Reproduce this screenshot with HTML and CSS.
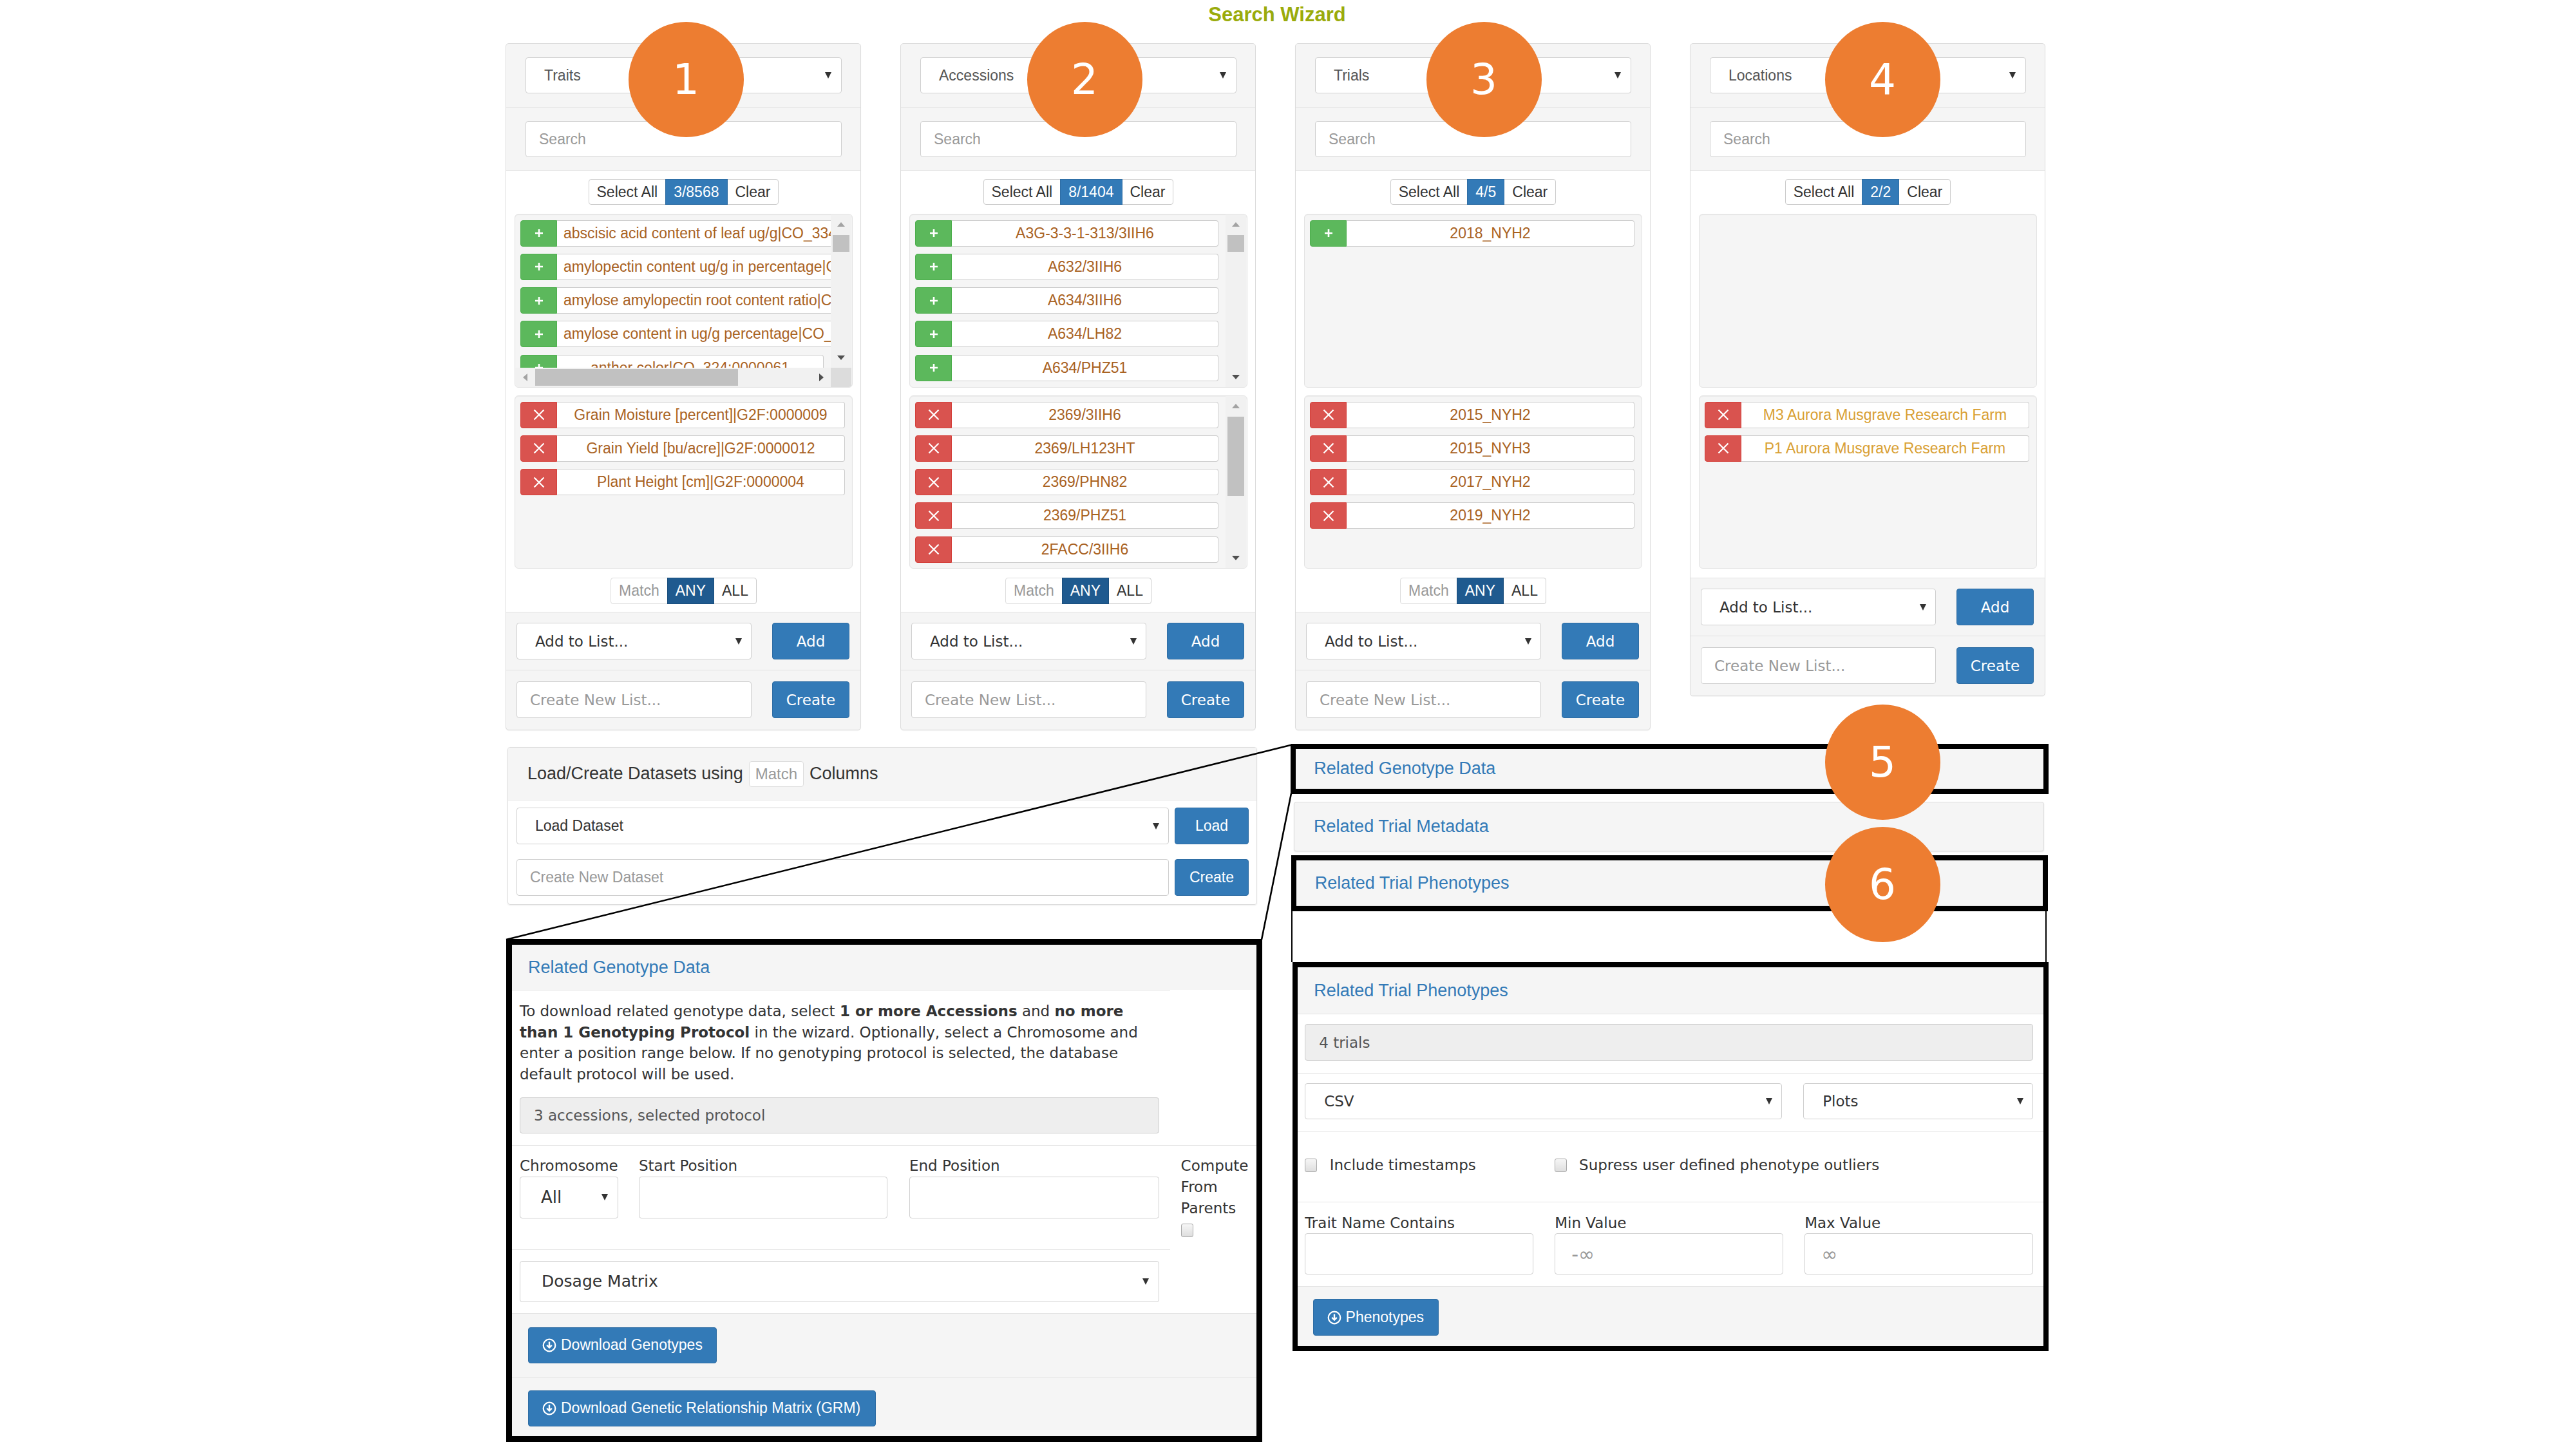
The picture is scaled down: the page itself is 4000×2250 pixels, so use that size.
FILE: index.html
```html
<!DOCTYPE html>
<html lang="en">
<head>
<meta charset="utf-8">
<title>Search Wizard</title>
<link rel="stylesheet" href="styles.css">
</head>
<body>
<div class="page">
  <h1 class="title">Search Wizard</h1>

  <div class="wizard">
    <!-- Panel 1 -->
    <section class="wpanel">
      <div class="sec"><div class="sel">Traits</div></div>
      <div class="sec search"><div class="inp">Search</div></div>
      <div class="body">
        <div class="bgrp"><span class="b">Select All</span><span class="b on">3/8568</span><span class="b">Clear</span></div>
        <div class="well up hv">
          <div class="vp">
            <div class="rows wide">
              <div class="row"><span class="rb add"><svg width="14" height="14" viewBox="0 0 14 14"><path d="M7 1v12M1 7h12" stroke="#fff" stroke-width="2.6"/></svg></span><span class="rf">abscisic acid content of leaf ug/g|CO_334:0000047</span></div>
              <div class="row"><span class="rb add"><svg width="14" height="14" viewBox="0 0 14 14"><path d="M7 1v12M1 7h12" stroke="#fff" stroke-width="2.6"/></svg></span><span class="rf">amylopectin content ug/g in percentage|CO_334:0000121</span></div>
              <div class="row"><span class="rb add"><svg width="14" height="14" viewBox="0 0 14 14"><path d="M7 1v12M1 7h12" stroke="#fff" stroke-width="2.6"/></svg></span><span class="rf">amylose amylopectin root content ratio|CO_334:0000124</span></div>
              <div class="row"><span class="rb add"><svg width="14" height="14" viewBox="0 0 14 14"><path d="M7 1v12M1 7h12" stroke="#fff" stroke-width="2.6"/></svg></span><span class="rf">amylose content in ug/g percentage|CO_334:0000120</span></div>
              <div class="row"><span class="rb add"><svg width="14" height="14" viewBox="0 0 14 14"><path d="M7 1v12M1 7h12" stroke="#fff" stroke-width="2.6"/></svg></span><span class="rf">anther color|CO_324:0000061</span></div>
            </div>
          </div>
          <div class="vsb"><span class="ar up dis"></span><span class="th t26"></span><span class="sp"></span><span class="ar dn"></span></div>
          <div class="hsb"><span class="ar lf dis"></span><span class="th h315"></span><span class="sp"></span><span class="ar rt"></span></div>
          <div class="corner"></div>
        </div>
        <div class="well lo">
          <div class="rows">
            <div class="row"><span class="rb rm"><svg width="18" height="18" viewBox="0 0 18 18"><path d="M1.5 1.5l15 15M16.5 1.5l-15 15" stroke="#fff" stroke-width="2.2"/></svg></span><span class="rf">Grain Moisture [percent]|G2F:0000009</span></div>
            <div class="row"><span class="rb rm"><svg width="18" height="18" viewBox="0 0 18 18"><path d="M1.5 1.5l15 15M16.5 1.5l-15 15" stroke="#fff" stroke-width="2.2"/></svg></span><span class="rf">Grain Yield [bu/acre]|G2F:0000012</span></div>
            <div class="row"><span class="rb rm"><svg width="18" height="18" viewBox="0 0 18 18"><path d="M1.5 1.5l15 15M16.5 1.5l-15 15" stroke="#fff" stroke-width="2.2"/></svg></span><span class="rf">Plant Height [cm]|G2F:0000004</span></div>
          </div>
        </div>
        <div class="bgrp mg"><span class="b dim">Match</span><span class="b act">ANY</span><span class="b">ALL</span></div>
      </div>
      <div class="foot"><div class="fsel">Add to List...</div><span class="fbtn">Add</span></div>
      <div class="foot last"><div class="finp">Create New List...</div><span class="fbtn">Create</span></div>
    </section>

    <!-- Panel 2 -->
    <section class="wpanel">
      <div class="sec"><div class="sel">Accessions</div></div>
      <div class="sec search"><div class="inp">Search</div></div>
      <div class="body">
        <div class="bgrp"><span class="b">Select All</span><span class="b on">8/1404</span><span class="b">Clear</span></div>
        <div class="well up vonly">
          <div class="rows">
            <div class="row"><span class="rb add"><svg width="14" height="14" viewBox="0 0 14 14"><path d="M7 1v12M1 7h12" stroke="#fff" stroke-width="2.6"/></svg></span><span class="rf">A3G-3-3-1-313/3IIH6</span></div>
            <div class="row"><span class="rb add"><svg width="14" height="14" viewBox="0 0 14 14"><path d="M7 1v12M1 7h12" stroke="#fff" stroke-width="2.6"/></svg></span><span class="rf">A632/3IIH6</span></div>
            <div class="row"><span class="rb add"><svg width="14" height="14" viewBox="0 0 14 14"><path d="M7 1v12M1 7h12" stroke="#fff" stroke-width="2.6"/></svg></span><span class="rf">A634/3IIH6</span></div>
            <div class="row"><span class="rb add"><svg width="14" height="14" viewBox="0 0 14 14"><path d="M7 1v12M1 7h12" stroke="#fff" stroke-width="2.6"/></svg></span><span class="rf">A634/LH82</span></div>
            <div class="row"><span class="rb add"><svg width="14" height="14" viewBox="0 0 14 14"><path d="M7 1v12M1 7h12" stroke="#fff" stroke-width="2.6"/></svg></span><span class="rf">A634/PHZ51</span></div>
          </div>
          <div class="vsb"><span class="ar up dis"></span><span class="th t26"></span><span class="sp"></span><span class="ar dn"></span></div>
        </div>
        <div class="well lo vonly">
          <div class="rows">
            <div class="row"><span class="rb rm"><svg width="18" height="18" viewBox="0 0 18 18"><path d="M1.5 1.5l15 15M16.5 1.5l-15 15" stroke="#fff" stroke-width="2.2"/></svg></span><span class="rf">2369/3IIH6</span></div>
            <div class="row"><span class="rb rm"><svg width="18" height="18" viewBox="0 0 18 18"><path d="M1.5 1.5l15 15M16.5 1.5l-15 15" stroke="#fff" stroke-width="2.2"/></svg></span><span class="rf">2369/LH123HT</span></div>
            <div class="row"><span class="rb rm"><svg width="18" height="18" viewBox="0 0 18 18"><path d="M1.5 1.5l15 15M16.5 1.5l-15 15" stroke="#fff" stroke-width="2.2"/></svg></span><span class="rf">2369/PHN82</span></div>
            <div class="row"><span class="rb rm"><svg width="18" height="18" viewBox="0 0 18 18"><path d="M1.5 1.5l15 15M16.5 1.5l-15 15" stroke="#fff" stroke-width="2.2"/></svg></span><span class="rf">2369/PHZ51</span></div>
            <div class="row"><span class="rb rm"><svg width="18" height="18" viewBox="0 0 18 18"><path d="M1.5 1.5l15 15M16.5 1.5l-15 15" stroke="#fff" stroke-width="2.2"/></svg></span><span class="rf">2FACC/3IIH6</span></div>
          </div>
          <div class="vsb"><span class="ar up dis"></span><span class="th t123"></span><span class="sp"></span><span class="ar dn"></span></div>
        </div>
        <div class="bgrp mg"><span class="b dim">Match</span><span class="b act">ANY</span><span class="b">ALL</span></div>
      </div>
      <div class="foot"><div class="fsel">Add to List...</div><span class="fbtn">Add</span></div>
      <div class="foot last"><div class="finp">Create New List...</div><span class="fbtn">Create</span></div>
    </section>

    <!-- Panel 3 -->
    <section class="wpanel">
      <div class="sec"><div class="sel">Trials</div></div>
      <div class="sec search"><div class="inp">Search</div></div>
      <div class="body">
        <div class="bgrp"><span class="b">Select All</span><span class="b on">4/5</span><span class="b">Clear</span></div>
        <div class="well up">
          <div class="rows">
            <div class="row"><span class="rb add"><svg width="14" height="14" viewBox="0 0 14 14"><path d="M7 1v12M1 7h12" stroke="#fff" stroke-width="2.6"/></svg></span><span class="rf">2018_NYH2</span></div>
          </div>
        </div>
        <div class="well lo">
          <div class="rows">
            <div class="row"><span class="rb rm"><svg width="18" height="18" viewBox="0 0 18 18"><path d="M1.5 1.5l15 15M16.5 1.5l-15 15" stroke="#fff" stroke-width="2.2"/></svg></span><span class="rf">2015_NYH2</span></div>
            <div class="row"><span class="rb rm"><svg width="18" height="18" viewBox="0 0 18 18"><path d="M1.5 1.5l15 15M16.5 1.5l-15 15" stroke="#fff" stroke-width="2.2"/></svg></span><span class="rf">2015_NYH3</span></div>
            <div class="row"><span class="rb rm"><svg width="18" height="18" viewBox="0 0 18 18"><path d="M1.5 1.5l15 15M16.5 1.5l-15 15" stroke="#fff" stroke-width="2.2"/></svg></span><span class="rf">2017_NYH2</span></div>
            <div class="row"><span class="rb rm"><svg width="18" height="18" viewBox="0 0 18 18"><path d="M1.5 1.5l15 15M16.5 1.5l-15 15" stroke="#fff" stroke-width="2.2"/></svg></span><span class="rf">2019_NYH2</span></div>
          </div>
        </div>
        <div class="bgrp mg"><span class="b dim">Match</span><span class="b act">ANY</span><span class="b">ALL</span></div>
      </div>
      <div class="foot"><div class="fsel">Add to List...</div><span class="fbtn">Add</span></div>
      <div class="foot last"><div class="finp">Create New List...</div><span class="fbtn">Create</span></div>
    </section>

    <!-- Panel 4 -->
    <section class="wpanel nomatch">
      <div class="sec"><div class="sel">Locations</div></div>
      <div class="sec search"><div class="inp">Search</div></div>
      <div class="body">
        <div class="bgrp"><span class="b">Select All</span><span class="b on">2/2</span><span class="b">Clear</span></div>
        <div class="well up"><div class="rows"></div></div>
        <div class="well lo">
          <div class="rows loc">
            <div class="row"><span class="rb rm"><svg width="18" height="18" viewBox="0 0 18 18"><path d="M1.5 1.5l15 15M16.5 1.5l-15 15" stroke="#fff" stroke-width="2.2"/></svg></span><span class="rf">M3 Aurora Musgrave Research Farm</span></div>
            <div class="row"><span class="rb rm"><svg width="18" height="18" viewBox="0 0 18 18"><path d="M1.5 1.5l15 15M16.5 1.5l-15 15" stroke="#fff" stroke-width="2.2"/></svg></span><span class="rf">P1 Aurora Musgrave Research Farm</span></div>
          </div>
        </div>
      </div>
      <div class="foot"><div class="fsel">Add to List...</div><span class="fbtn">Add</span></div>
      <div class="foot last"><div class="finp">Create New List...</div><span class="fbtn">Create</span></div>
    </section>
  </div>

  <div class="lower">
    <div class="lcol">
      <div class="dspanel">
        <div class="dshead"><span>Load/Create Datasets using</span><span class="mbox">Match</span><span>Columns</span></div>
        <div class="dsbody">
          <div class="dsrow"><div class="dsel">Load Dataset</div><span class="dbtn">Load</span></div>
          <div class="dsrow"><div class="dinp">Create New Dataset</div><span class="dbtn">Create</span></div>
        </div>
      </div>

      <div class="detail gdetail">
        <div class="dhead">Related Genotype Data</div>
        <div class="hrp"></div>
        <div class="gbody">
          <p class="gp">To download related genotype data, select <b>1 or more Accessions</b> and <b>no more<br>than 1 Genotyping Protocol</b> in the wizard. Optionally, select a Chromosome and<br>enter a position range below. If no genotyping protocol is selected, the database<br>default protocol will be used.</p>
          <div class="ro">3 accessions, selected protocol</div>
        </div>
        <div class="grow">
          <div class="gc c1"><div class="lbl">Chromosome</div><div class="gsel small">All</div></div>
          <div class="gc c2"><div class="lbl">Start Position</div><div class="ginp"></div></div>
          <div class="gc c3"><div class="lbl">End Position</div><div class="ginp"></div></div>
          <div class="gc c4"><div class="lbl">Compute From Parents</div><span class="cb"></span></div>
        </div>
        <div class="hrp"></div>
        <div class="gdos"><div class="gsel big">Dosage Matrix</div></div>
        <div class="gfoot first"><span class="pbtn w293"><svg class="dl" width="22" height="22" viewBox="0 0 22 22"><circle cx="11" cy="11" r="9.3" fill="none" stroke="#fff" stroke-width="2.2"/><path d="M11 5.5v9M7.2 10.8L11 14.6l3.8-3.8" fill="none" stroke="#fff" stroke-width="2.4"/></svg>Download Genotypes</span></div>
        <div class="gfoot second"><span class="pbtn w540"><svg class="dl" width="22" height="22" viewBox="0 0 22 22"><circle cx="11" cy="11" r="9.3" fill="none" stroke="#fff" stroke-width="2.2"/><path d="M11 5.5v9M7.2 10.8L11 14.6l3.8-3.8" fill="none" stroke="#fff" stroke-width="2.4"/></svg>Download Genetic Relationship Matrix (GRM)</span></div>
      </div>
    </div>

    <div class="rcol">
      <div class="hl box5"><div class="ph">Related Genotype Data</div></div>
      <div class="meta">Related Trial Metadata</div>
      <div class="hl box6"><div class="ph">Related Trial Phenotypes</div></div>
      <div class="connector"></div>
      <div class="detail pdetail">
        <div class="dhead p">Related Trial Phenotypes</div>
        <div class="pb1"><div class="ro">4 trials</div></div>
        <div class="pb2"><div class="gsel csv">CSV</div><div class="gsel plots">Plots</div></div>
        <div class="pb3"><label class="ck first"><span class="cb"></span>Include timestamps</label><label class="ck"><span class="cb"></span>Supress user defined phenotype outliers</label></div>
        <div class="pb4">
          <div class="pc"><div class="lbl">Trait Name Contains</div><div class="pinp"></div></div>
          <div class="pc"><div class="lbl">Min Value</div><div class="pinp">-∞</div></div>
          <div class="pc"><div class="lbl">Max Value</div><div class="pinp">∞</div></div>
        </div>
        <div class="pfoot"><span class="pbtn w195"><svg class="dl" width="22" height="22" viewBox="0 0 22 22"><circle cx="11" cy="11" r="9.3" fill="none" stroke="#fff" stroke-width="2.2"/><path d="M11 5.5v9M7.2 10.8L11 14.6l3.8-3.8" fill="none" stroke="#fff" stroke-width="2.4"/></svg>Phenotypes</span></div>
      </div>
    </div>
  </div>

  <svg class="overlay" width="2396" height="2250" viewBox="0 0 2396 2250">
    <line x1="1219" y1="1157" x2="1" y2="1459" stroke="#000" stroke-width="2.6"/>
    <line x1="1220" y1="1232" x2="1174" y2="1459" stroke="#000" stroke-width="2.6"/>
  </svg>

  <div class="badge b1">1</div>
  <div class="badge b2">2</div>
  <div class="badge b3">3</div>
  <div class="badge b4">4</div>
  <div class="badge b5">5</div>
  <div class="badge b6">6</div>
</div>
</body>
</html>
```

FILE: styles.css
```css
* { box-sizing: border-box; }
html, body { margin: 0; background: #fff; }
body { font-family: "Liberation Sans", Arial, sans-serif; color: #333; font-size: 23px; }

.page { position: relative; margin-left: 785px; width: 2396px; }

.title {
  margin: 0 0 22px;
  height: 45px;
  line-height: 45px;
  text-align: center;
  font-size: 31px;
  font-weight: bold;
  color: #9aab0b;
}

/* ---------- wizard panels ---------- */
.wizard { display: flex; gap: 61px; align-items: flex-start; }
.wpanel {
  width: 552px;
  border: 1px solid #dcdcdc;
  border-radius: 5px;
  background: #f5f5f5;
  overflow: hidden;
  box-shadow: 0 1px 1px rgba(0,0,0,.05);
}
.sec { padding: 21px 29px 21px 30px; border-bottom: 1px solid #e2e2e2; }
.sec.search { padding-bottom: 20px; }

.sel, .inp {
  position: relative;
  height: 56px;
  background: #fff;
  border: 1px solid #cfcfcf;
  border-radius: 4px;
  display: flex;
  align-items: center;
  font-size: 23px;
}
.sel { padding-left: 28px; color: #555; }
.inp { padding-left: 20px; color: #999; }
.sel::after, .fsel::after, .dsel::after, .gsel::after {
  content: "";
  position: absolute;
  top: 50%;
  right: 15px;
  margin-top: -5px;
  border-left: 5.5px solid transparent;
  border-right: 5.5px solid transparent;
  border-top: 10px solid #333;
}

.body {
  background: #fff;
  padding: 13px 12px 12px 13px;
  border-bottom: 1px solid #e2e2e2;
  display: flex;
  flex-direction: column;
  align-items: center;
}
.nomatch .body { padding-bottom: 14px; }

.bgrp { display: inline-flex; height: 40px; }
.bgrp .b {
  display: flex;
  align-items: center;
  padding: 0 12px;
  background: #fff;
  border: 1px solid #ccc;
  margin-left: -1px;
  color: #333;
  font-size: 23px;
}
.bgrp .b:first-child { margin-left: 0; border-radius: 4px 0 0 4px; }
.bgrp .b:last-child { border-radius: 0 4px 4px 0; }
.bgrp .b.on { background: #337ab7; border-color: #2e6da4; color: #fff; position: relative; }
.bgrp.mg { height: 41px; margin-top: 14px; }
.bgrp .b.dim { color: #999; border-color: #ddd; }
.bgrp .b.act { background: #1f5a8f; border-color: #1a4e7d; color: #fff; position: relative; }

/* list wells */
.well {
  align-self: stretch;
  background: #f5f5f5;
  border: 1px solid #e3e3e3;
  border-radius: 6px;
  box-shadow: inset 0 1px 1px rgba(0,0,0,.05);
  overflow: hidden;
}
.well.up { height: 270px; margin-top: 14px; }
.well.lo { height: 269px; margin-top: 12px; }
.well.vonly { display: grid; grid-template-columns: 1fr 32px; padding-right: 1px; }
.well.hv {
  display: grid;
  grid-template-columns: 1fr 32px;
  grid-template-rows: 1fr 30px;
  padding-right: 1px;
}
.vp { overflow: hidden; min-width: 0; }

.rows { padding: 8.5px 11px 8px 8px; overflow: hidden; min-width: 0; }
.row { display: flex; height: 41px; margin-bottom: 11.3px; }
.rows.wide .row { width: max-content; min-width: 100%; }
.rb {
  flex: none;
  width: 57px;
  display: flex;
  align-items: center;
  justify-content: center;
  border-radius: 4px 0 0 4px;
}
.rb.add { background: #5cb85c; border: 1px solid #4cae4c; }
.rb.rm { background: #d9534f; border: 1px solid #d43f3a; }
.rf {
  flex: 1;
  display: flex;
  align-items: center;
  justify-content: center;
  padding: 0 10px;
  background: #fff;
  border: 1px solid #ccc;
  border-left: 0;
  border-radius: 0 4px 4px 0;
  white-space: nowrap;
  font-size: 23px;
  color: #a9621f;
}
.rows.loc .rf { color: #d9a033; }

/* fake scrollbars */
.vsb { background: #f1f1f1; display: flex; flex-direction: column; }
.hsb { background: #f1f1f1; display: flex; }
.corner { background: #dcdcdc; }
.ar { flex: none; width: 32px; height: 32px; position: relative; }
.hsb .ar { height: 30px; width: 31px; }
.ar::after { content: ""; position: absolute; left: 50%; top: 50%; }
.ar.up::after { margin: -4px 0 0 -6.5px; border-left: 6.5px solid transparent; border-right: 6.5px solid transparent; border-bottom: 7px solid #505050; }
.ar.dn::after { margin: -3px 0 0 -6.5px; border-left: 6.5px solid transparent; border-right: 6.5px solid transparent; border-top: 7px solid #505050; }
.ar.lf::after { margin: -6.5px 0 0 -4px; border-top: 6.5px solid transparent; border-bottom: 6.5px solid transparent; border-right: 7px solid #505050; }
.ar.rt::after { margin: -6.5px 0 0 -3px; border-top: 6.5px solid transparent; border-bottom: 6.5px solid transparent; border-left: 7px solid #505050; }
.ar.up.dis::after { border-bottom-color: #a3a3a3; }
.ar.lf.dis::after { border-right-color: #a3a3a3; }
.th { background: #c1c1c1; flex: none; }
.vsb .th { margin: 0 3px; }
.th.t26 { height: 26px; }
.th.t123 { height: 123px; }
.hsb .th { margin: 2px 0; }
.th.h315 { width: 315px; }
.sp { flex: 1; }

/* footers */
.foot {
  display: flex;
  justify-content: space-between;
  padding: 16px 17px 16px 16px;
  border-bottom: 1px solid #e2e2e2;
}
.foot.last { border-bottom: 0; padding: 17px 17px 18px 16px; }
.fsel, .finp {
  position: relative;
  width: 365px;
  height: 57px;
  background: #fff;
  border: 1px solid #cfcfcf;
  border-radius: 4px;
  display: flex;
  align-items: center;
  font-family: "DejaVu Sans", Verdana, sans-serif;
  font-size: 23px;
}
.fsel { padding-left: 28px; color: #333; }
.fsel::after { right: 14px; }
.finp { padding-left: 20px; color: #999; }
.fbtn {
  width: 120px;
  height: 57px;
  display: flex;
  align-items: center;
  justify-content: center;
  background: #337ab7;
  border: 1px solid #2e6da4;
  border-radius: 4px;
  color: #fff;
  font-family: "DejaVu Sans", Verdana, sans-serif;
  font-size: 23px;
}

/* ---------- lower area ---------- */
.lower { display: flex; align-items: flex-start; margin-top: 21px; }
.lcol { width: 1174px; margin-left: 1px; margin-top: 5px; }
.rcol { width: 1178px; margin-left: 44px; }

.dspanel {
  margin-left: 2px;
  width: 1164px;
  border: 1px solid #ddd;
  border-radius: 4px;
  overflow: hidden;
  box-shadow: 0 1px 2px rgba(0,0,0,.08);
}
.dshead {
  height: 82px;
  background: #f5f5f5;
  border-bottom: 1px solid #e6e6e6;
  padding-left: 30px;
  display: flex;
  align-items: center;
  gap: 9px;
  font-size: 27px;
  color: #333;
}
.mbox {
  height: 40px;
  padding: 0 9px;
  display: flex;
  align-items: center;
  background: #fff;
  border: 1px solid #ddd;
  border-radius: 4px;
  color: #999;
  font-size: 24px;
}
.dsbody { padding: 11px 12px 13px 13px; }
.dsrow { display: flex; gap: 9px; height: 57px; }
.dsrow + .dsrow { margin-top: 23px; }
.dsel, .dinp {
  position: relative;
  flex: 1;
  background: #fff;
  border: 1px solid #cfcfcf;
  border-radius: 4px;
  display: flex;
  align-items: center;
  font-size: 23px;
}
.dsel { padding-left: 28px; color: #333; }
.dsel::after { right: 14px; }
.dinp { padding-left: 20px; color: #999; }
.dbtn {
  width: 115px;
  display: flex;
  align-items: center;
  justify-content: center;
  background: #337ab7;
  border: 1px solid #2e6da4;
  border-radius: 4px;
  color: #fff;
  font-size: 23px;
}

/* detail panels (outlined in black) */
.detail { background: #fff; border: 9px solid #000; }
.gdetail { margin-top: 53px; }
.dhead {
  height: 70px;
  background: #f5f5f5;
  padding-left: 25px;
  display: flex;
  align-items: center;
  font-size: 27px;
  color: #337ab7;
}
.dhead.p { height: 73px; padding-left: 25.6px; border-bottom: 1px solid #e3e3e3; }
.hrp { width: 1022px; height: 1px; background: #e3e3e3; }

.gbody, .grow, .gdos, .pb1, .pb2, .pb3, .pb4 {
  font-family: "DejaVu Sans", Verdana, sans-serif;
  font-size: 23px;
  color: #333;
}
.gbody { padding: 16px 0 18px 12px; border-bottom: 1px solid #e3e3e3; }
.gp { margin: 0 0 20px; line-height: 32.6px; white-space: nowrap; }
.gp b { font-weight: bold; }
.ro {
  height: 56px;
  width: 993px;
  background: #eee;
  border: 1px solid #ccc;
  border-radius: 4px;
  padding-left: 21px;
  display: flex;
  align-items: center;
  color: #555;
}
.pb1 .ro { width: auto; height: 57px; }

.grow { display: flex; padding: 15px 0 19px 12px; }
.gc { flex: none; }
.c1 { width: 153px; margin-right: 32px; }
.c2 { width: 386px; margin-right: 34px; }
.c3 { width: 388px; margin-right: 33.6px; }
.c4 { width: 117px; }
.lbl { line-height: 32.6px; }
.cb {
  display: inline-block;
  flex: none;
  width: 19px;
  height: 21px;
  border: 1px solid #a8a8a8;
  border-radius: 3px;
  background: linear-gradient(#f6f6f6, #dedede);
  vertical-align: middle;
}
.c4 .cb { margin-top: 7px; }

.gsel, .ginp, .pinp {
  position: relative;
  background: #fff;
  border: 1px solid #cfcfcf;
  border-radius: 4px;
  display: flex;
  align-items: center;
}
.gsel.small { height: 65px; padding-left: 32px; font-size: 26px; }
.gsel.big { height: 64px; width: 993px; padding-left: 33px; font-size: 25px; }
.gsel.small::after, .gsel.big::after { right: 15px; }
.ginp { height: 65px; }
.gdos { padding: 17px 0 17px 12px; border-bottom: 1px solid #e3e3e3; }
.gfoot { background: #f5f5f5; padding: 21px 25px; }
.gfoot.first { border-bottom: 1px solid #e3e3e3; }
.gfoot.second { padding: 20px 25px 15px; }

.pbtn {
  height: 56px;
  display: inline-flex;
  align-items: center;
  gap: 7px;
  padding-left: 21px;
  background: #337ab7;
  border: 1px solid #2e6da4;
  border-radius: 4px;
  color: #fff;
  font-size: 23px;
  vertical-align: top;
}
.pbtn.w293 { width: 293px; }
.pbtn.w540 { width: 540px; }
.pbtn.w195 { width: 195px; height: 57px; }
.dl { flex: none; }

/* right column */
.hl { border: 8px solid #000; }
.hl .ph {
  height: 100%;
  background: #f5f5f5;
  border-bottom: 1px solid #e0e0e0;
  display: flex;
  align-items: center;
  padding-left: 28.6px;
  font-size: 27px;
  color: #337ab7;
}
.box5 { height: 78px; }
.meta {
  margin: 12px 0 0 5.5px;
  width: 1164.5px;
  height: 77px;
  background: #f5f5f5;
  border: 1px solid #ddd;
  border-radius: 4px;
  box-shadow: 0 1px 2px rgba(0,0,0,.1);
  display: flex;
  align-items: center;
  padding-left: 30px;
  font-size: 27px;
  color: #337ab7;
}
.box6 { margin: 6px 0 0 1.6px; width: 1175px; height: 87px; }
.connector {
  margin-left: 1.6px;
  width: 1172.4px;
  height: 79px;
  border-left: 2px solid #000;
  border-right: 2px solid #000;
}
.pdetail { margin-left: 3px; width: 1174px; border-width: 8px; }

.pb1 { padding: 15px 16px 19px 11.6px; border-bottom: 1px solid #e3e3e3; }
.pb2 { display: flex; gap: 33px; padding: 15px 16px 18px 11.6px; border-bottom: 1px solid #e3e3e3; }
.gsel.csv { width: 741px; height: 56px; padding-left: 29px; }
.gsel.plots { flex: 1; height: 56px; padding-left: 29px; }
.gsel.csv::after, .gsel.plots::after { right: 14px; }
.pb3 {
  height: 110px;
  display: flex;
  align-items: center;
  padding: 0 0 5px 11.6px;
  border-bottom: 1px solid #e3e3e3;
}
.ck { display: flex; align-items: center; gap: 19.5px; }
.ck.first { width: 387.4px; }
.pb4 {
  display: grid;
  grid-template-columns: 1fr 1fr 1fr;
  column-gap: 33.5px;
  padding: 16px 16px 18px 11.6px;
  border-bottom: 1px solid #e3e3e3;
}
.pb4 .lbl { line-height: 32px; }
.pinp { height: 64px; padding-left: 25px; color: #999; font-size: 30px; }
.pfoot { background: #f5f5f5; padding: 19px 24px 16px; }

/* annotations */
.overlay { position: absolute; left: 0; top: 0; overflow: visible; pointer-events: none; }
.badge {
  position: absolute;
  width: 179px;
  height: 179px;
  border-radius: 50%;
  background: #ed7d31;
  color: #fff;
  font-family: "DejaVu Sans", sans-serif;
  font-size: 66px;
  display: flex;
  align-items: center;
  justify-content: center;
}
.b1 { left: 190.5px; top: 33.5px; }
.b2 { left: 809.5px; top: 33.5px; }
.b3 { left: 1429.5px; top: 33.5px; }
.b4 { left: 2048.5px; top: 33.5px; }
.b5 { left: 2048.5px; top: 1093.5px; }
.b6 { left: 2048.5px; top: 1283.5px; }
```
